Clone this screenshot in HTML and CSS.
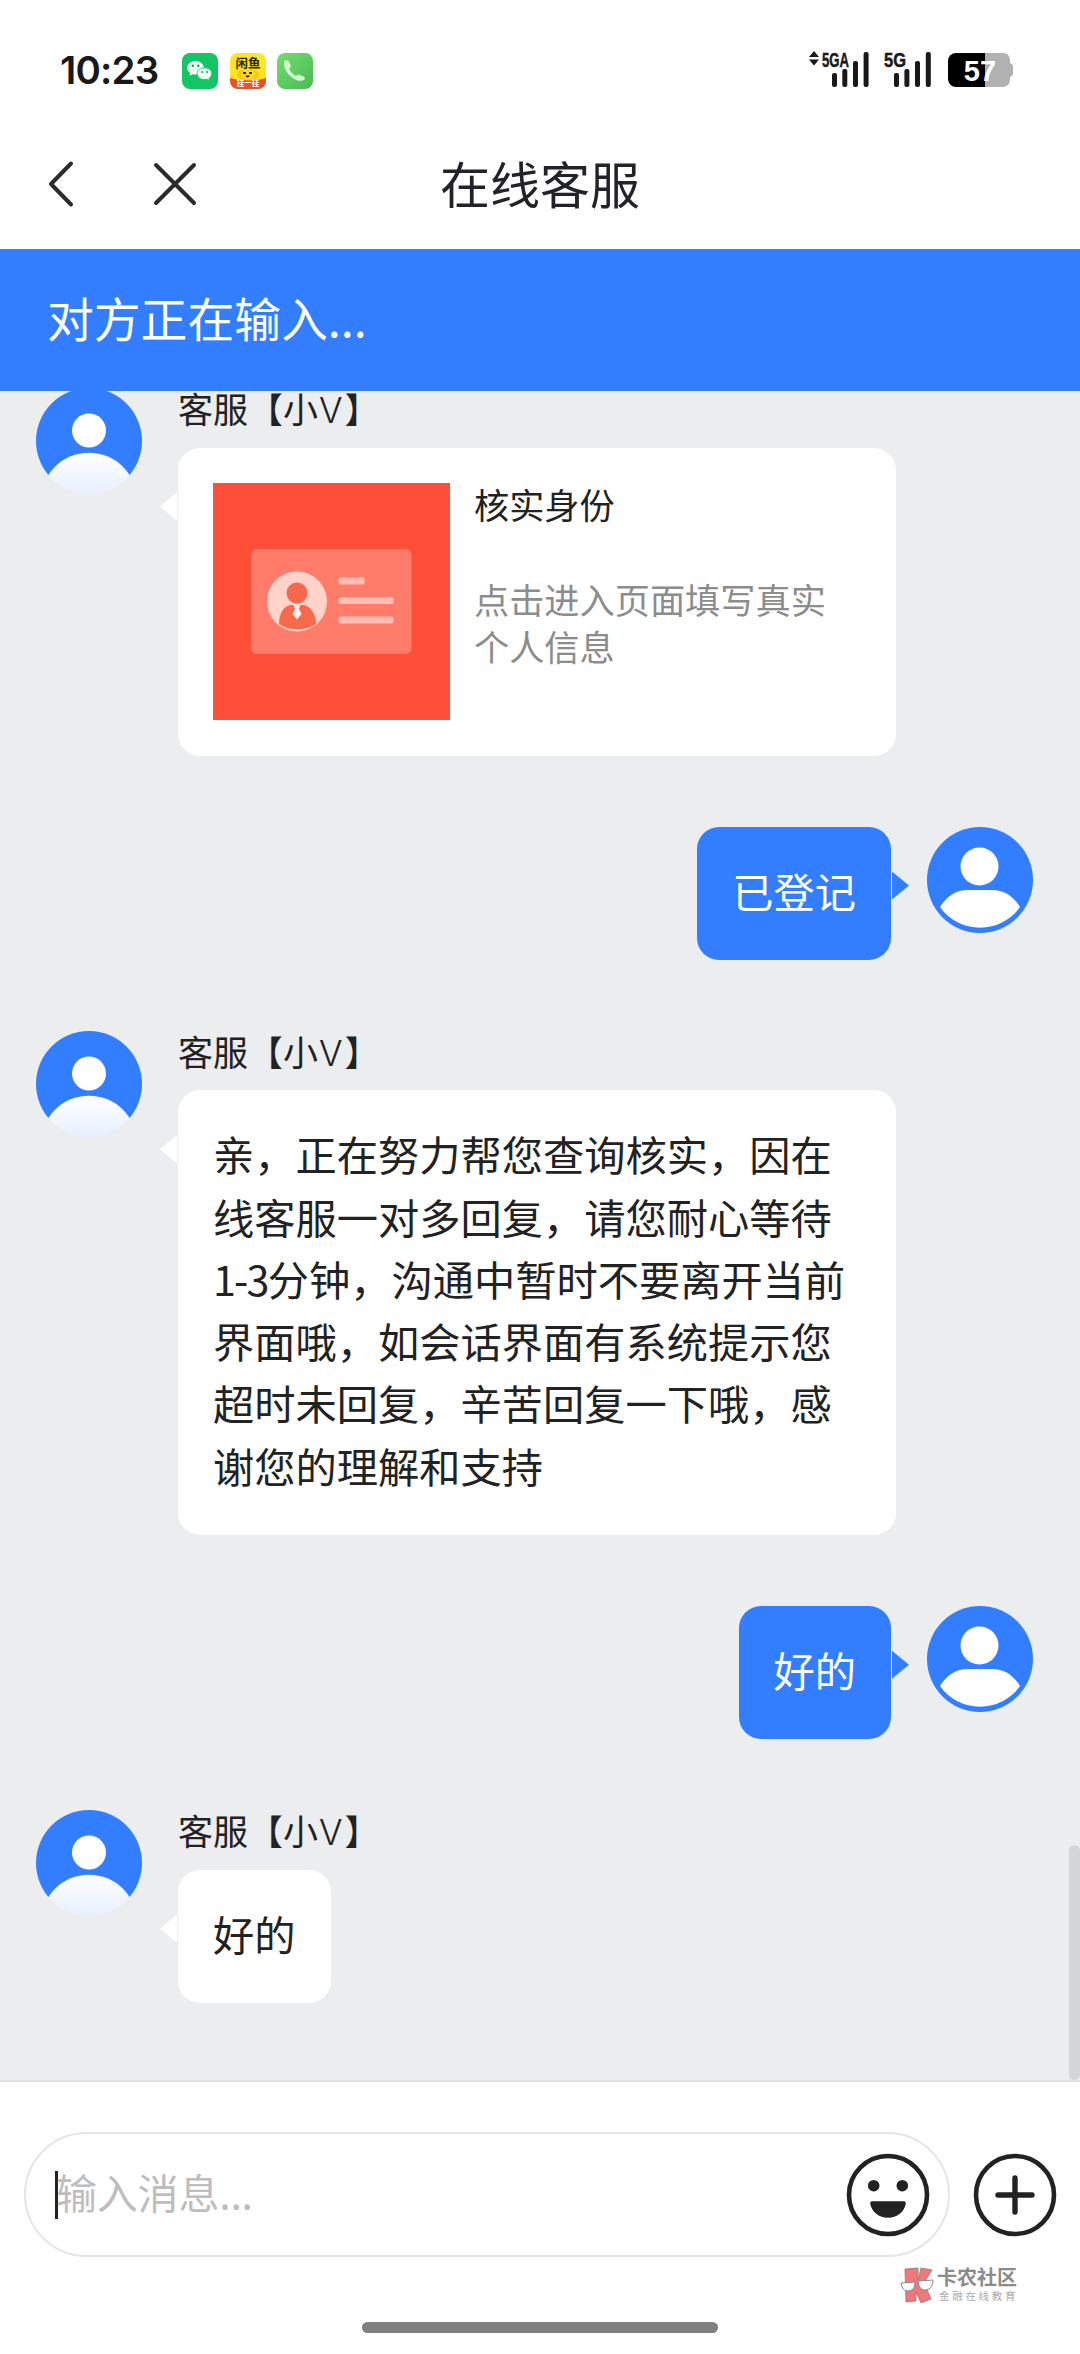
FILE: index.html
```html
<!DOCTYPE html>
<html lang="zh-CN">
<head>
<meta charset="UTF-8">
<meta name="viewport" content="width=device-width, initial-scale=1">
<title>在线客服</title>
<link rel="stylesheet" href="styles.css">
</head>
<body>
<svg class="defs" width="0" height="0" aria-hidden="true">
  <defs>
    <linearGradient id="torso" x1="0" y1="0" x2="0" y2="1"><stop offset="0" stop-color="#fff"/><stop offset="1" stop-color="#e3ecff"/></linearGradient>
    <clipPath id="disc"><circle cx="53" cy="53" r="53"/></clipPath>
  </defs>
  <symbol id="agent" viewBox="0 0 106 106">
    <g clip-path="url(#disc)">
      <path d="M0 0H106V87H0z" fill="#337eff"/>
      <path d="M4.900 112.800a48.100 48.100 0 0 1 96.200 0z" fill="url(#torso)"/>
    </g>
    <circle cx="53" cy="42.500" r="17" fill="#fff"/>
  </symbol>
  <symbol id="user" viewBox="0 0 106 106">
    <circle cx="53" cy="53" r="53" fill="#337eff"/>
    <circle cx="52.500" cy="39.500" r="19" fill="#fff"/>
    <path d="M13 80C20 69 29 63 41 63H65C77 63 86 69 93 80A49 49 0 0 1 13 80z" fill="#fff"/>
  </symbol>
</svg>

<header class="status">
  <time class="clock">10:23</time>
  <div class="apps">
    <svg viewBox="0 0 36 36"><rect width="36" height="36" rx="8" fill="#12c565"/><path d="M13.500 8C8.800 8 5.200 11 5.200 14.800c0 2.200 1.200 4.100 3.100 5.300l-.8 2.700 3-1.600c1 .3 2 .4 3 .4 4.700 0 8.300-3 8.300-6.800S18.200 8 13.500 8z" fill="#effff5"/><path d="M22.500 14.800c-4.200 0-7.300 2.600-7.300 5.900s3.100 5.900 7.300 5.900c.9 0 1.800-.1 2.600-.4l2.700 1.400-.7-2.400c1.700-1.100 2.700-2.700 2.700-4.500 0-3.300-3.100-5.900-7.300-5.900z" fill="#effff5" stroke="#12c565" stroke-width=".9"/><g fill="#12a355"><circle cx="10.800" cy="12.800" r="1.200"/><circle cx="16.300" cy="12.800" r="1.200"/><circle cx="20" cy="19" r="1"/><circle cx="25" cy="19" r="1"/></g></svg>
    <svg viewBox="0 0 36 36"><defs><clipPath id="fishbox"><rect width="36" height="36" rx="8"/></clipPath></defs><g clip-path="url(#fishbox)"><rect width="36" height="36" fill="#ffe51f"/><ellipse cx="18" cy="22" rx="11" ry="6.500" fill="#ffc800"/><path d="M0 25q18 5 36 0v11H0z" fill="#e9522c"/><ellipse cx="18" cy="21" rx="7" ry="5.500" fill="#ffd928"/><path d="M14 20h1m5 0h1" stroke="#222" stroke-width="2.200" stroke-linecap="round"/><path d="M15.500 22.500q2 4 4.500 0z" fill="#222"/></g><text class="fish-name" x="18" y="15" text-anchor="middle">闲鱼</text><text class="fish-tag" x="18" y="33" text-anchor="middle">挂一挂</text></svg>
    <svg viewBox="0 0 36 36"><defs><linearGradient id="call" x1="0" y1="0" x2="1" y2="1"><stop offset="0" stop-color="#74dc72"/><stop offset="1" stop-color="#45bd50"/></linearGradient></defs><rect width="36" height="36" rx="8" fill="url(#call)"/><path d="M7.200 8.200c1.400-1.300 3.700-1.200 4.800.4l1.600 3.700c.5 1.300-.2 2.300-1.400 3 1 3.400 3.500 6 7 7.600l.9-.8c.8-.6 1.600-.6 2.500-.2l4.100 1.700c1.600.8 1.500 2.400.4 3.200-3 2-7.600 1.200-12.500-2.600C9.400 20.100 6 13.500 7.200 8.200z" fill="#d5f6d3"/></svg>
  </div>
  <svg class="signals" viewBox="0 0 210 42">
    <g fill="#191919">
      <path d="M5 8l5-6 5 6zM5 10.500h10l-5 6z"/>
      <rect x="28" y="24" width="5" height="14" rx="2"/><rect x="38.300" y="20" width="5" height="18" rx="2"/><rect x="49" y="12" width="5" height="26" rx="2"/><rect x="59.600" y="3" width="5" height="35" rx="2"/>
      <rect x="90" y="24" width="5" height="14" rx="2"/><rect x="100.400" y="20" width="5" height="18" rx="2"/><rect x="111" y="12" width="5" height="26" rx="2"/><rect x="121.800" y="3" width="5" height="35" rx="2"/>
      <text class="net" x="18" y="17.500" textLength="27" lengthAdjust="spacingAndGlyphs">5GA</text>
      <text class="net" x="80" y="17.500" textLength="22" lengthAdjust="spacingAndGlyphs">5G</text>
    </g>
    <path d="M200 4a7 7 0 0 1 6 7v3q3 1 3 3v8q0 2-3 3v3a7 7 0 0 1-7 7h-18V4z" fill="#b1b1b1"/>
    <path d="M152 4H181V38H152a8 8 0 0 1-8-8V12a8 8 0 0 1 8-8z"/>
    <text class="level" x="176" y="31.500" text-anchor="middle">57</text>
  </svg>
</header>

<nav class="topbar">
  <svg class="back" viewBox="0 0 28 48"><path d="M25 3.500L5 24l20 20.500"/></svg>
  <svg class="close" viewBox="0 0 48 48"><path d="M5 5l38 38M43 5L5 43"/></svg>
  <h1>在线客服</h1>
</nav>

<div class="typing">对方正在输入...</div>

<main class="chat">
  <article class="msg">
    <svg class="avatar"><use href="#agent"/></svg>
    <div class="body">
      <div class="name">客服【小<span class="latin">V</span>】</div>
      <div class="bubble card">
        <svg class="thumb" viewBox="0 0 237 237">
          <rect width="237" height="237" fill="#ff4f38"/>
          <rect x="38" y="66" width="160.500" height="105" rx="6" fill="#ff7c6a"/>
          <circle cx="84" cy="118.500" r="30" fill="#ffd3ca"/>
          <circle cx="84" cy="110" r="10.500" fill="#f7694d"/>
          <path d="M66 141c0-11 5-19 13-19h10c8 0 14 8 14 19-10 7-27 7-37 0z" fill="#f7694d"/>
          <path d="M80.500 121.500h7l-1.500 4.500 2.500 5-4.500 5.500-4.500-5.500 2.500-5z" fill="#fff0ec"/>
          <g fill="#ffbdb3"><rect x="125.500" y="94.500" width="26" height="7" rx="2"/><rect x="125.500" y="114" width="55" height="7" rx="2"/><rect x="125.500" y="133.500" width="55" height="7" rx="2"/></g>
        </svg>
        <div class="card-text">
          <h2>核实身份</h2>
          <p>点击进入页面填写真实个人信息</p>
        </div>
      </div>
    </div>
  </article>

  <article class="msg mine">
    <svg class="avatar"><use href="#user"/></svg>
    <div class="bubble">已登记</div>
  </article>

  <article class="msg">
    <svg class="avatar"><use href="#agent"/></svg>
    <div class="body">
      <div class="name">客服【小<span class="latin">V</span>】</div>
      <div class="bubble">亲，正在努力帮您查询核实，因在线客服一对多回复，请您耐心等待<br><span class="range">1-3</span>分钟，沟通中暂时不要离开当前界面哦，如会话界面有系统提示您超时未回复，辛苦回复一下哦，感谢您的理解和支持</div>
    </div>
  </article>

  <article class="msg mine">
    <svg class="avatar"><use href="#user"/></svg>
    <div class="bubble">好的</div>
  </article>

  <article class="msg">
    <svg class="avatar"><use href="#agent"/></svg>
    <div class="body">
      <div class="name">客服【小<span class="latin">V</span>】</div>
      <div class="bubble">好的</div>
    </div>
  </article>
  <div class="scrollbar"></div>
</main>

<footer class="composer">
  <div class="row">
    <div class="field">
      <span class="caret"></span>
      <span class="placeholder">输入消息...</span>
      <svg class="round" viewBox="-42 -42 84 84"><circle r="39" fill="none" stroke="#222" stroke-width="4.600"/><g fill="#222"><circle cx="-14.300" cy="-9.300" r="5.800"/><circle cx="14.300" cy="-9.300" r="5.800"/><path d="M-16 6.300H16Q18 6.300 17.800 8.500C16.500 17 9 22.800 0 22.800S-16.500 17-17.800 8.500Q-18 6.300-16 6.300z"/></g></svg>
    </div>
    <svg class="round" viewBox="-42 -42 84 84"><circle r="39" fill="none" stroke="#222" stroke-width="4.600"/><path d="M-17 0H17M0-17V17" stroke="#222" stroke-width="5.400" stroke-linecap="round"/></svg>
  </div>
  <div class="brand">
    <svg viewBox="0 0 34 36"><path d="M5 2l13-1v12l3-12 11 2-8 13 7 16-10 4-5-11v9l-10 1z" fill="#f0787b" stroke="#9b7474" stroke-width=".8"/><path d="M1 16l14-1q0 9-7 9-6 0-7-8zM18 14l15-1q0 9-7 10-7 1-8-9z" fill="#fff" stroke="#888" stroke-width="1"/></svg>
    <div class="brand-text"><b>卡农社区</b><small>金融在线教育</small></div>
  </div>
  <div class="home"></div>
</footer>
</body>
</html>
```
FILE: styles.css
```css
* { box-sizing: border-box; }

body {
  margin: 0;
  width: 1080px;
  height: 2354px;
  display: flex;
  flex-direction: column;
  overflow: hidden;
  background: #fff;
  color: #222;
  font-family: "Noto Sans CJK SC", sans-serif;
  font-size: 41.25px;
}

svg { display: block; flex: none; }
.defs { position: absolute; }

.status {
  height: 120px;
  padding: 49px 66px 0 60px;
  display: flex;
  align-items: flex-start;
}
.clock {
  width: 122px;
  font: 600 38.500px/42px Inter, sans-serif;
  letter-spacing: -0.8px;
  color: #191919;
}
.apps { display: flex; gap: 11.500px; padding-top: 4px; }
.apps svg { width: 36px; height: 36px; }
.fish-name { font-size: 12.500px; font-weight: 700; fill: #2a2500; }
.fish-tag { font-size: 7.500px; font-weight: 700; fill: #fff; }
.signals { width: 210px; height: 42px; margin-left: auto; }
.net { font: 700 21px/1 "Liberation Sans", sans-serif; stroke: #191919; stroke-width: 0.5px; }
.level { font: 700 29px/1 "Liberation Sans", sans-serif; fill: #fff; }

.topbar {
  height: 129px;
  padding: 0 46px 2px;
  display: grid;
  grid-template-columns: 105px 1fr auto 1fr 105px;
  align-items: center;
}
.topbar svg { fill: none; stroke: #2b2b2b; stroke-width: 4; stroke-linecap: round; stroke-linejoin: round; }
.back { width: 28px; height: 48px; }
.close { width: 48px; height: 48px; }
.topbar h1 { margin: 0; padding-bottom: 4px; font-size: 50px; line-height: 60px; font-weight: 400; color: #22222a; }

.typing {
  height: 142px;
  flex: none;
  padding-left: 47px;
  background: #337eff;
  color: #fff;
  font-size: 46.800px;
  line-height: 135px;
}

.chat {
  height: 1689px;
  flex: none;
  position: relative;
  overflow: hidden;
  padding: 0 47px 0 36px;
  background: #ebedef;
  display: flex;
  flex-direction: column;
  gap: 71px;
}
.msg { display: flex; gap: 36px; align-items: flex-start; }
.msg:first-child { margin-top: -3px; }
.mine { flex-direction: row-reverse; }
.avatar { width: 106px; height: 106px; }
.body { display: flex; flex-direction: column; align-items: flex-start; }
.name { height: 59.500px; font-size: 35px; line-height: 40px; }
.latin { display: inline-block; padding: 0 1px; font-size: 35px; font-family: Inter, sans-serif; font-weight: 300; line-height: 1; letter-spacing: 1px; }

.bubble {
  position: relative;
  max-width: 718px;
  padding: 32px 35px 39px;
  border-radius: 22px;
  background: #fff;
  line-height: 62.250px;
}
.bubble::before {
  content: "";
  position: absolute;
  top: 45px;
  left: -18px;
  width: 17px;
  height: 28px;
  background: #fff;
  clip-path: polygon(100% 0, 0 50%, 100% 100%);
}
.mine .bubble { background: #337eff; color: #fff; }
.mine .bubble::before {
  left: auto;
  right: -18px;
  background: #337eff;
  clip-path: polygon(0 0, 100% 50%, 0 100%);
}
.range { letter-spacing: -1.8px; }

.bubble.card { width: 718px; padding: 35.500px 35px; display: flex; gap: 24px; }
.thumb { width: 237px; height: 237px; }
.card-text { width: 360px; }
.card-text h2 { margin: -3px 0 48px; font-size: 35.200px; line-height: 47px; font-weight: 400; }
.card-text p { margin: 0; font-size: 35.200px; line-height: 47px; color: #8c8c8c; }

.scrollbar {
  position: absolute;
  top: 1454px;
  right: 0;
  width: 11px;
  height: 235px;
  border-radius: 6px;
  background: #d4d5d7;
}

.composer {
  flex: 1;
  border-top: 2px solid #e3e4e5;
  padding: 50px 23px 0 24px;
  display: flex;
  flex-direction: column;
}
.row { display: flex; align-items: center; justify-content: space-between; }
.field {
  width: 926px;
  height: 125px;
  padding: 0 18px 0 29px;
  border: 2px solid #e5e5e5;
  border-radius: 63px;
  display: flex;
  align-items: center;
}
.caret { width: 3px; height: 48px; margin-right: -2px; background: #222; }
.placeholder { flex: 1; padding-bottom: 8px; font-size: 41px; line-height: 60px; letter-spacing: -0.2px; color: #bdbdbd; }
.round { width: 84px; height: 84px; }

.brand { display: flex; gap: 3px; height: 36px; margin: 10px 39px 0 auto; align-items: flex-start; }
.brand svg { width: 34px; height: 36px; }
.brand-text { width: 81px; display: flex; flex-direction: column; gap: 1px; color: #8b8b8b; white-space: nowrap; }
.brand-text b { font-size: 20px; line-height: 20px; }
.brand-text small { padding-left: 2px; font-size: 10.500px; line-height: 15px; letter-spacing: 2.700px; color: #aaa; }

.home { width: 356px; height: 11px; margin: 19px auto 0 338px; border-radius: 6px; background: #7f7f7f; }
```
